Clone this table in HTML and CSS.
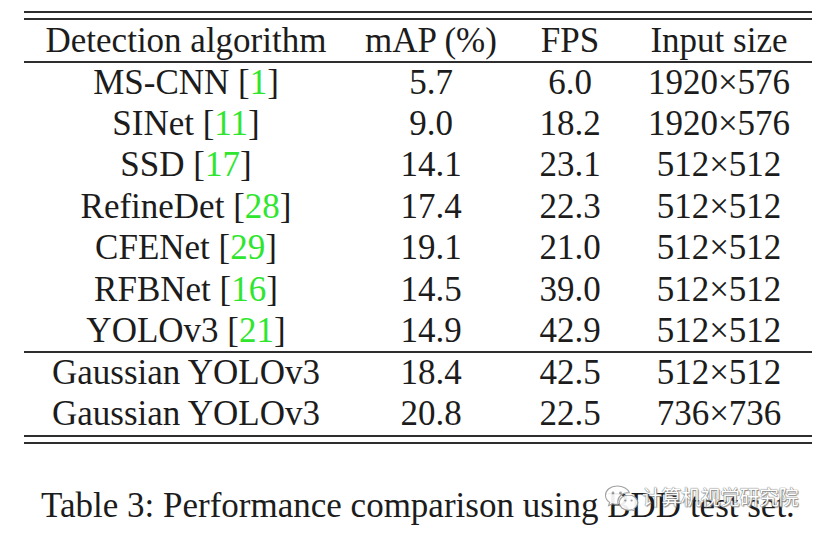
FILE: index.html
```html
<!DOCTYPE html>
<html lang="en">
<head>
<meta charset="utf-8">
<title>Table 3</title>
<link rel="stylesheet" href="styles.css">
</head>
<body>
<div class="page">
  <div class="rule"></div>
  <div class="rule rule-gap"></div>
  <table class="results">
    <colgroup>
      <col class="c1"><col class="c2"><col class="c3"><col class="c4">
    </colgroup>
    <thead>
      <tr><th>Detection algorithm</th><th>mAP (%)</th><th>FPS</th><th>Input size</th></tr>
    </thead>
    <tbody class="baseline">
      <tr><td>MS-CNN [<span class="ref">1</span>]</td><td>5.7</td><td>6.0</td><td>1920×576</td></tr>
      <tr><td>SINet [<span class="ref">11</span>]</td><td>9.0</td><td>18.2</td><td>1920×576</td></tr>
      <tr><td>SSD [<span class="ref">17</span>]</td><td>14.1</td><td>23.1</td><td>512×512</td></tr>
      <tr><td>RefineDet [<span class="ref">28</span>]</td><td>17.4</td><td>22.3</td><td>512×512</td></tr>
      <tr><td>CFENet [<span class="ref">29</span>]</td><td>19.1</td><td>21.0</td><td>512×512</td></tr>
      <tr><td>RFBNet [<span class="ref">16</span>]</td><td>14.5</td><td>39.0</td><td>512×512</td></tr>
      <tr><td>YOLOv3 [<span class="ref">21</span>]</td><td>14.9</td><td>42.9</td><td>512×512</td></tr>
    </tbody>
    <tbody class="ours">
      <tr><td>Gaussian YOLOv3</td><td>18.4</td><td>42.5</td><td>512×512</td></tr>
      <tr><td>Gaussian YOLOv3</td><td>20.8</td><td>22.5</td><td>736×736</td></tr>
    </tbody>
  </table>
  <div class="rule"></div>
  <div class="rule rule-gap"></div>
  <div class="caption-wrap">
    <p class="caption">Table 3: Performance comparison using BDD test set.</p>
    <div class="watermark">
      <svg class="wm-icon" viewBox="0 0 36 28" width="36" height="28" aria-hidden="true">
        <path d="M13 3C6.4 3 1.5 7.2 1.5 12.3c0 2.9 1.6 5.4 4.1 7.1l-1 3.3 3.8-2c1.4.4 2.9.7 4.600.7.4 0 .8 0 1.2-.1-.3-.9-.4-1.8-.4-2.700 0-5 4.7-9 10.6-9h.9C24.3 6 19.2 3 13 3z" fill="#fff" stroke="#9a9a9a" stroke-width="1.1"/>
        <circle cx="9" cy="10" r="1.4" fill="#9a9a9a"/>
        <circle cx="16.5" cy="10" r="1.4" fill="#9a9a9a"/>
        <path d="M24.5 12c-5.2 0-9.3 3.4-9.3 7.6s4.1 7.6 9.3 7.6c1.2 0 2.3-.2 3.3-.5l3 1.6-.8-2.7c2.3-1.4 3.8-3.6 3.8-6 0-4.2-4.1-7.6-9.3-7.6z" fill="#fff" stroke="#9a9a9a" stroke-width="1.1"/>
        <circle cx="21.3" cy="17.5" r="1.1" fill="#9a9a9a"/>
        <circle cx="27.6" cy="17.5" r="1.1" fill="#9a9a9a"/>
      </svg>
      <span class="wm-text">计算机视觉研究院</span>
    </div>
  </div>
</div>
</body>
</html>
```

FILE: styles.css
```css
html, body {
  margin: 0;
  padding: 0;
  background: #ffffff;
}

body {
  font-family: "Liberation Serif", "Times New Roman", serif;
  color: #1c1c1c;
  width: 826px;
  height: 534px;
  overflow: hidden;
}

.page {
  padding: 11px 14px 0 24px;
}

.rule {
  height: 2px;
  background: #2e2e2e;
}

.rule-gap {
  margin-top: 5px;
}

.results {
  width: 100%;
  border-collapse: collapse;
  table-layout: fixed;
  font-size: 35px;
}

.c1 { width: 324px; }
.c2 { width: 166px; }
.c3 { width: 112px; }
.c4 { width: auto; }

.results th,
.results td {
  padding: 0;
  text-align: center;
  font-weight: normal;
  white-space: nowrap;
  line-height: 40px;
}

.results thead tr {
  height: 42px;
  border-bottom: 2px solid #2e2e2e;
}

.results tbody.baseline tr {
  height: 41.4px;
}

.results tbody.baseline tr:last-child {
  border-bottom: 2px solid #2e2e2e;
}

.results tbody.ours tr {
  height: 41.5px;
}

.ref {
  color: #2fe62f;
}

.caption-wrap {
  position: relative;
  margin-top: 42px;
}

.caption {
  margin: 0;
  font-size: 35px;
  line-height: 40px;
  text-align: center;
  color: #1c1c1c;
  white-space: nowrap;
}

.watermark {
  position: absolute;
  left: 580px;
  top: -3px;
  display: flex;
  align-items: center;
  gap: 2px;
  opacity: 0.92;
}

.wm-icon {
  display: block;
}

.wm-text {
  font-family: "Noto Sans CJK SC", sans-serif;
  font-size: 20px;
  line-height: 24px;
  color: #ffffff;
  letter-spacing: -0.5px;
  text-shadow: 0 0 1px #6a6a6a, 0 0 1px #6a6a6a, 1px 1px 1px #8a8a8a;
}
```
